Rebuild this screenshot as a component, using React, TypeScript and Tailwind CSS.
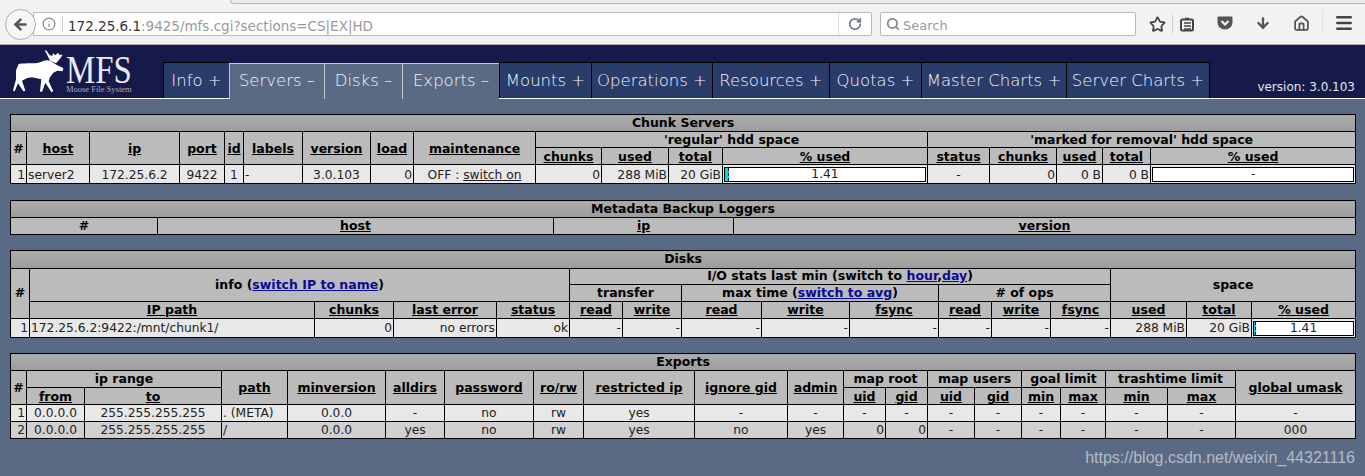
import { ReactNode } from "react"
import { ArrowDown, ArrowLeft, Home, Info, Menu, RotateCw, Search, Star } from "lucide-react"

const tabs = [
  { label: "Info +", w: "w-[66px]" },
  { label: "Servers –", w: "w-[95px]", active: true },
  { label: "Disks –", w: "w-[78px]", active: true },
  { label: "Exports –", w: "w-[97px]", active: true },
  { label: "Mounts +", w: "w-[92px]" },
  { label: "Operations +", w: "w-[121px]" },
  { label: "Resources +", w: "w-[117px]" },
  { label: "Quotas +", w: "w-[92px]" },
  { label: "Master Charts +", w: "w-[145px]" },
  { label: "Server Charts +", w: "w-[143px]" },
]

function Title({ children, span, tall }: { children: ReactNode; span: number; tall?: boolean }) {
  return (
    <tr className={tall ? "h-[18px]" : "h-[17px]"}>
      <th
        colSpan={span}
        className="border border-black bg-gradient-to-b from-[#acacac] to-[#9c9c9c] p-0 text-center text-[12.5px] leading-none font-bold text-black"
      >
        {children}
      </th>
    </tr>
  )
}

function H({
  children,
  link,
  col,
  row,
}: {
  children: ReactNode
  link?: boolean
  col?: number
  row?: number
}) {
  return (
    <th
      colSpan={col}
      rowSpan={row}
      className="border border-black bg-[#bbbbbb] px-0 text-center text-[12.5px] leading-none font-bold whitespace-nowrap text-black"
    >
      {link ? <span className="underline">{children}</span> : children}
    </th>
  )
}

function D({ children, align = "c" }: { children?: ReactNode; align?: "l" | "c" | "r" }) {
  return (
    <td
      className={
        "border border-black px-0 text-[12.25px] leading-none whitespace-nowrap text-[#222] " +
        (align === "l" ? "pl-[1px] text-left" : align === "r" ? "pr-[1px] text-right" : "text-center")
      }
    >
      {children}
    </td>
  )
}

function Bar({ value, fill }: { value: string; fill?: string }) {
  return (
    <td className="border border-black p-[1px]">
      <div className="relative flex h-[15px] items-center justify-center border border-black bg-white text-[12.25px] leading-none text-[#222]">
        {fill && (
          <div className={"absolute top-0 bottom-0 left-0 border-r border-dashed border-black bg-[#00d8e8] " + fill} />
        )}
        {value}
      </div>
    </td>
  )
}

function ChunkServers() {
  return (
    <table className="w-[1345px] table-fixed border-collapse">
      <colgroup>
        <col className="w-[16px]" />
        <col className="w-[63px]" />
        <col className="w-[90px]" />
        <col className="w-[45px]" />
        <col className="w-[19px]" />
        <col className="w-[59px]" />
        <col className="w-[68px]" />
        <col className="w-[43px]" />
        <col className="w-[122px]" />
        <col className="w-[66px]" />
        <col className="w-[67px]" />
        <col className="w-[54px]" />
        <col className="w-[205px]" />
        <col className="w-[62px]" />
        <col className="w-[67px]" />
        <col className="w-[46px]" />
        <col className="w-[48px]" />
        <col className="w-[205px]" />
      </colgroup>
      <thead>
        <Title span={18}>Chunk Servers</Title>
        <tr className="h-[16px] [&>th]:pt-[2px] [&>th]:pb-0">
          <H row={2}>#</H>
          <H row={2} link>host</H>
          <H row={2} link>ip</H>
          <H row={2} link>port</H>
          <H row={2} link>id</H>
          <H row={2} link>labels</H>
          <H row={2} link>version</H>
          <H row={2} link>load</H>
          <H row={2} link>maintenance</H>
          <H col={4}>'regular' hdd space</H>
          <H col={5}>'marked for removal' hdd space</H>
        </tr>
        <tr className="h-[17px] [&>th]:pt-[2px] [&>th]:pb-0">
          <H link>chunks</H>
          <H link>used</H>
          <H link>total</H>
          <H link>% used</H>
          <H link>status</H>
          <H link>chunks</H>
          <H link>used</H>
          <H link>total</H>
          <H link>% used</H>
        </tr>
      </thead>
      <tbody>
        <tr className="h-[19px] bg-[#e8e8e8] [&>td]:pt-[2px]">
          <D align="r">1</D>
          <D align="l">server2</D>
          <D>172.25.6.2</D>
          <D>9422</D>
          <D>1</D>
          <D align="l">-</D>
          <D>3.0.103</D>
          <D align="r">0</D>
          <D>
            OFF : <span className="underline">switch on</span>
          </D>
          <D align="r">0</D>
          <D align="r">288 MiB</D>
          <D align="r">20 GiB</D>
          <Bar value="1.41" fill="w-[4px]" />
          <D>-</D>
          <D align="r">0</D>
          <D align="r">0 B</D>
          <D align="r">0 B</D>
          <Bar value="-" />
        </tr>
      </tbody>
    </table>
  )
}

function BackupLoggers() {
  return (
    <table className="mt-[16px] w-[1345px] table-fixed border-collapse">
      <colgroup>
        <col className="w-[147px]" />
        <col className="w-[396px]" />
        <col className="w-[180px]" />
        <col className="w-[622px]" />
      </colgroup>
      <thead>
        <Title span={4}>Metadata Backup Loggers</Title>
        <tr className="h-[17px]">
          <H>#</H>
          <H link>host</H>
          <H link>ip</H>
          <H link>version</H>
        </tr>
      </thead>
    </table>
  )
}

function Disks() {
  return (
    <table className="mt-[15px] w-[1345px] table-fixed border-collapse">
      <colgroup>
        <col className="w-[19px]" />
        <col className="w-[285px]" />
        <col className="w-[79px]" />
        <col className="w-[103px]" />
        <col className="w-[73px]" />
        <col className="w-[53px]" />
        <col className="w-[59px]" />
        <col className="w-[80px]" />
        <col className="w-[88px]" />
        <col className="w-[89px]" />
        <col className="w-[53px]" />
        <col className="w-[59px]" />
        <col className="w-[60px]" />
        <col className="w-[76px]" />
        <col className="w-[65px]" />
        <col className="w-[104px]" />
      </colgroup>
      <thead>
        <Title span={16} tall>Disks</Title>
        <tr className="h-[16px]">
          <H row={3}>#</H>
          <H col={4} row={2}>
            info (<span className="text-[#0a0a96] underline">switch IP to name</span>)
          </H>
          <H col={8}>
            I/O stats last min (switch to <span className="text-[#0a0a96] underline">hour</span>,
            <span className="text-[#0a0a96] underline">day</span>)
          </H>
          <H col={3} row={2}>space</H>
        </tr>
        <tr className="h-[17px]">
          <H col={2}>transfer</H>
          <H col={3}>
            max time (<span className="text-[#0a0a96] underline">switch to avg</span>)
          </H>
          <H col={3}># of ops</H>
        </tr>
        <tr className="h-[17px]">
          <H link>IP path</H>
          <H link>chunks</H>
          <H link>last error</H>
          <H link>status</H>
          <H link>read</H>
          <H link>write</H>
          <H link>read</H>
          <H link>write</H>
          <H link>fsync</H>
          <H link>read</H>
          <H link>write</H>
          <H link>fsync</H>
          <H link>used</H>
          <H link>total</H>
          <H link>% used</H>
        </tr>
      </thead>
      <tbody>
        <tr className="h-[19px] bg-[#e8e8e8]">
          <D align="r">1</D>
          <D align="l">172.25.6.2:9422:/mnt/chunk1/</D>
          <D align="r">0</D>
          <D align="r">no errors</D>
          <D align="r">ok</D>
          <D align="r">-</D>
          <D align="r">-</D>
          <D align="r">-</D>
          <D align="r">-</D>
          <D align="r">-</D>
          <D align="r">-</D>
          <D align="r">-</D>
          <D align="r">-</D>
          <D align="r">288 MiB</D>
          <D align="r">20 GiB</D>
          <Bar value="1.41" fill="w-[2px]" />
        </tr>
      </tbody>
    </table>
  )
}

const exportRows = [
  { n: "1", path: ". (META)", alldirs: "-", ignore: "-", admin: "-", uid: "-", gid: "-", umask: "-", bg: "bg-[#e8e8e8]" },
  { n: "2", path: "/", alldirs: "yes", ignore: "no", admin: "yes", uid: "0", gid: "0", umask: "000", bg: "bg-[#d0d0d0]" },
]

function Exports() {
  return (
    <table className="mt-[15px] w-[1345px] table-fixed border-collapse">
      <colgroup>
        <col className="w-[16px]" />
        <col className="w-[58px]" />
        <col className="w-[137px]" />
        <col className="w-[66px]" />
        <col className="w-[98px]" />
        <col className="w-[59px]" />
        <col className="w-[89px]" />
        <col className="w-[50px]" />
        <col className="w-[111px]" />
        <col className="w-[93px]" />
        <col className="w-[56px]" />
        <col className="w-[42px]" />
        <col className="w-[42px]" />
        <col className="w-[47px]" />
        <col className="w-[47px]" />
        <col className="w-[39px]" />
        <col className="w-[45px]" />
        <col className="w-[62px]" />
        <col className="w-[68px]" />
        <col className="w-[120px]" />
      </colgroup>
      <thead>
        <Title span={20}>Exports</Title>
        <tr className="h-[17px] [&>th[rowspan]]:pt-[2px]">
          <H row={2}>#</H>
          <H col={2}>ip range</H>
          <H row={2} link>path</H>
          <H row={2} link>minversion</H>
          <H row={2} link>alldirs</H>
          <H row={2} link>password</H>
          <H row={2} link>ro/rw</H>
          <H row={2} link>restricted ip</H>
          <H row={2} link>ignore gid</H>
          <H row={2} link>admin</H>
          <H col={2}>map root</H>
          <H col={2}>map users</H>
          <H col={2}>goal limit</H>
          <H col={2}>trashtime limit</H>
          <H row={2} link>global umask</H>
        </tr>
        <tr className="h-[17px] [&>th]:pt-[3px] [&>th]:pb-0">
          <H link>from</H>
          <H link>to</H>
          <H link>uid</H>
          <H link>gid</H>
          <H link>uid</H>
          <H link>gid</H>
          <H link>min</H>
          <H link>max</H>
          <H link>min</H>
          <H link>max</H>
        </tr>
      </thead>
      <tbody>
        {exportRows.map((r) => (
          <tr key={r.n} className={"h-[17px] " + r.bg}>
            <D align="r">{r.n}</D>
            <D>0.0.0.0</D>
            <D>255.255.255.255</D>
            <D align="l">{r.path}</D>
            <D>0.0.0</D>
            <D>{r.alldirs}</D>
            <D>no</D>
            <D>rw</D>
            <D>yes</D>
            <D>{r.ignore}</D>
            <D>{r.admin}</D>
            <D align={r.uid === "0" ? "r" : "c"}>{r.uid}</D>
            <D align={r.gid === "0" ? "r" : "c"}>{r.gid}</D>
            <D>-</D>
            <D>-</D>
            <D>-</D>
            <D>-</D>
            <D>-</D>
            <D>-</D>
            <D>{r.umask}</D>
          </tr>
        ))}
      </tbody>
    </table>
  )
}

function Toolbar() {
  return (
    <header className="relative flex h-[45px] items-center border-b border-[#a9a9a9] bg-[#f2f2f2] pl-[5px] font-['DejaVu_Sans',sans-serif]">
      <div className="absolute top-0 right-0 left-[230px] h-[4px] rounded-bl-[4px] border-b border-l border-[#b4b4b4] bg-[#ececec]" />
      <div className="relative z-10 mt-[4px] flex h-[31px] w-[31px] items-center justify-center rounded-full border border-[#b0b0b0] bg-[#f6f6f6]">
        <ArrowLeft className="h-[17px] w-[17px] text-[#555]" strokeWidth={3.5} />
      </div>
      <div className="mt-[4px] -ml-[3px] flex h-[24px] w-[839px] items-center rounded-r-[2px] border border-[#b8b8b8] bg-white">
        <Info className="ml-[8px] h-[14px] w-[14px] text-[#888]" />
        <div className="mx-[6px] h-[16px] w-px bg-[#ccc]" />
        <span className="-ml-[1px] pt-[4px] text-[13.5px] whitespace-nowrap text-[#333]">
          172.25.6.1<span className="text-[#999]">:9425/mfs.cgi?sections=CS|EX|HD</span>
        </span>
        <div className="ml-auto flex h-full w-[33px] items-center justify-center border-l border-[#ddd]">
          <RotateCw className="h-[14px] w-[14px] text-[#6b7c8c]" strokeWidth={3} />
        </div>
      </div>
      <div className="mt-[3px] ml-[8px] flex h-[24px] w-[256px] items-center rounded-[2px] border border-[#b8b8b8] bg-white">
        <Search className="ml-[5px] h-[14px] w-[14px] text-[#888]" strokeWidth={3} />
        <span className="ml-[3px] pt-[4px] text-[13px] text-[#999]">Search</span>
      </div>
      <Star className="mt-[4px] ml-[13px] h-[17px] w-[17px] text-[#444]" strokeWidth={2.5} />
      <div className="mx-[6px] mt-[3px] h-[18px] w-px bg-[#ccc]" />
      <svg viewBox="0 0 16 16" className="mt-[4px] h-[16px] w-[16px] text-[#444]" fill="none" stroke="currentColor" strokeWidth="2">
        <rect x="2" y="3.5" width="12" height="11" rx="1.5" />
        <path d="M6 2.5h4M5 7h7M5 10h7M5 13h7" strokeWidth="1.4" />
      </svg>
      <svg viewBox="0 0 16 16" className="mt-[2px] ml-[22px] h-[16px] w-[16px]">
        <path d="M1.5 1.5h13a1 1 0 0 1 1 1v5c0 4-3.5 7-7.5 7S.5 11.500.5 7.500v-5a1 1 0 0 1 1-1z" fill="#555" />
        <path d="M4.500 6 8 9.500 11.500 6" fill="none" stroke="#f2f2f2" strokeWidth="2.200" />
      </svg>
      <ArrowDown className="mt-[2px] ml-[22px] h-[16px] w-[16px] text-[#555]" strokeWidth={3.5} />
      <Home className="mt-[2px] ml-[22px] h-[17px] w-[17px] text-[#555]" strokeWidth={2.5} />
      <div className="mr-[11px] ml-[12px] h-[26px] w-px bg-[#e2e2e2]" />
      <Menu className="mt-[2px] h-[20px] w-[20px] text-[#444]" strokeWidth={3} />
    </header>
  )
}

function Logo() {
  return (
    <div className="relative flex w-[163px] items-end pb-[5px] pl-[12px]">
      <svg viewBox="36 142 156 130" className="h-[44px] w-[52px] shrink-0 text-white" fill="currentColor">
        <path d="M56 186C80 182 108 188 128 178C138 172 150 174 156 180L172 190L190 198L188 208L172 206L160 212L150 226L146 238L160 268L154 270L136 242L126 270L120 268L124 232L96 226L82 228L66 236L76 266L70 268L54 244L44 268L39 266L48 232L48 205Z" />
        <path d="M134 144L140 146L148 158L156 162L160 154L166 160L174 152L178 158L188 158L180 170L168 184L150 176L142 160Z" />
      </svg>
      <div className="mb-[-1px] ml-[2px] font-['Liberation_Serif',serif] text-[#e8eaf2]">
        <div className="h-[30px] origin-left scale-x-[0.8] text-[41px] leading-[30px] whitespace-nowrap">MFS</div>
        <div className="text-[8.5px] leading-[10px] whitespace-nowrap text-[#aab]">Moose File System</div>
      </div>
    </div>
  )
}

function Nav() {
  return (
    <nav className="flex h-[54px] border-b border-white bg-[#151a4a] font-['DejaVu_Sans',sans-serif]">
      <Logo />
      <div className="flex items-end self-end">
        {tabs.map((t) => (
          <div
            key={t.label}
            className={
              "flex h-[36px] shrink-0 items-center justify-center border-l border-t text-[16.5px] font-extralight whitespace-nowrap text-[#f2f4fa] " +
              t.w +
              (t.active ? " -mb-px border-[#c8c8c8] bg-[#5a6a85] pb-px" : " border-black bg-[#2a3c6a] pt-[2px]")
            }
          >
            {t.label}
          </div>
        ))}
        <div className="h-[36px] w-px bg-black" />
      </div>
      <div className="ml-auto self-end pr-[10px] pb-[5px] text-[12px] leading-none text-[#e4e6ee]">version: 3.0.103</div>
    </nav>
  )
}

export default function App() {
  return (
    <div className="relative flex h-[476px] w-[1365px] flex-col overflow-hidden bg-[#5a6a85] font-['DejaVu_Sans',sans-serif]">
      <Toolbar />
      <Nav />
      <main className="flex-1 pt-[15px] pl-[10px]">
        <ChunkServers />
        <BackupLoggers />
        <Disks />
        <Exports />
      </main>
      <div className="absolute right-[10px] bottom-[10px] font-['Liberation_Sans',sans-serif] text-[16px] leading-none text-[#b4bac6]">
        https://blog.csdn.net/weixin_44321116
      </div>
    </div>
  )
}
